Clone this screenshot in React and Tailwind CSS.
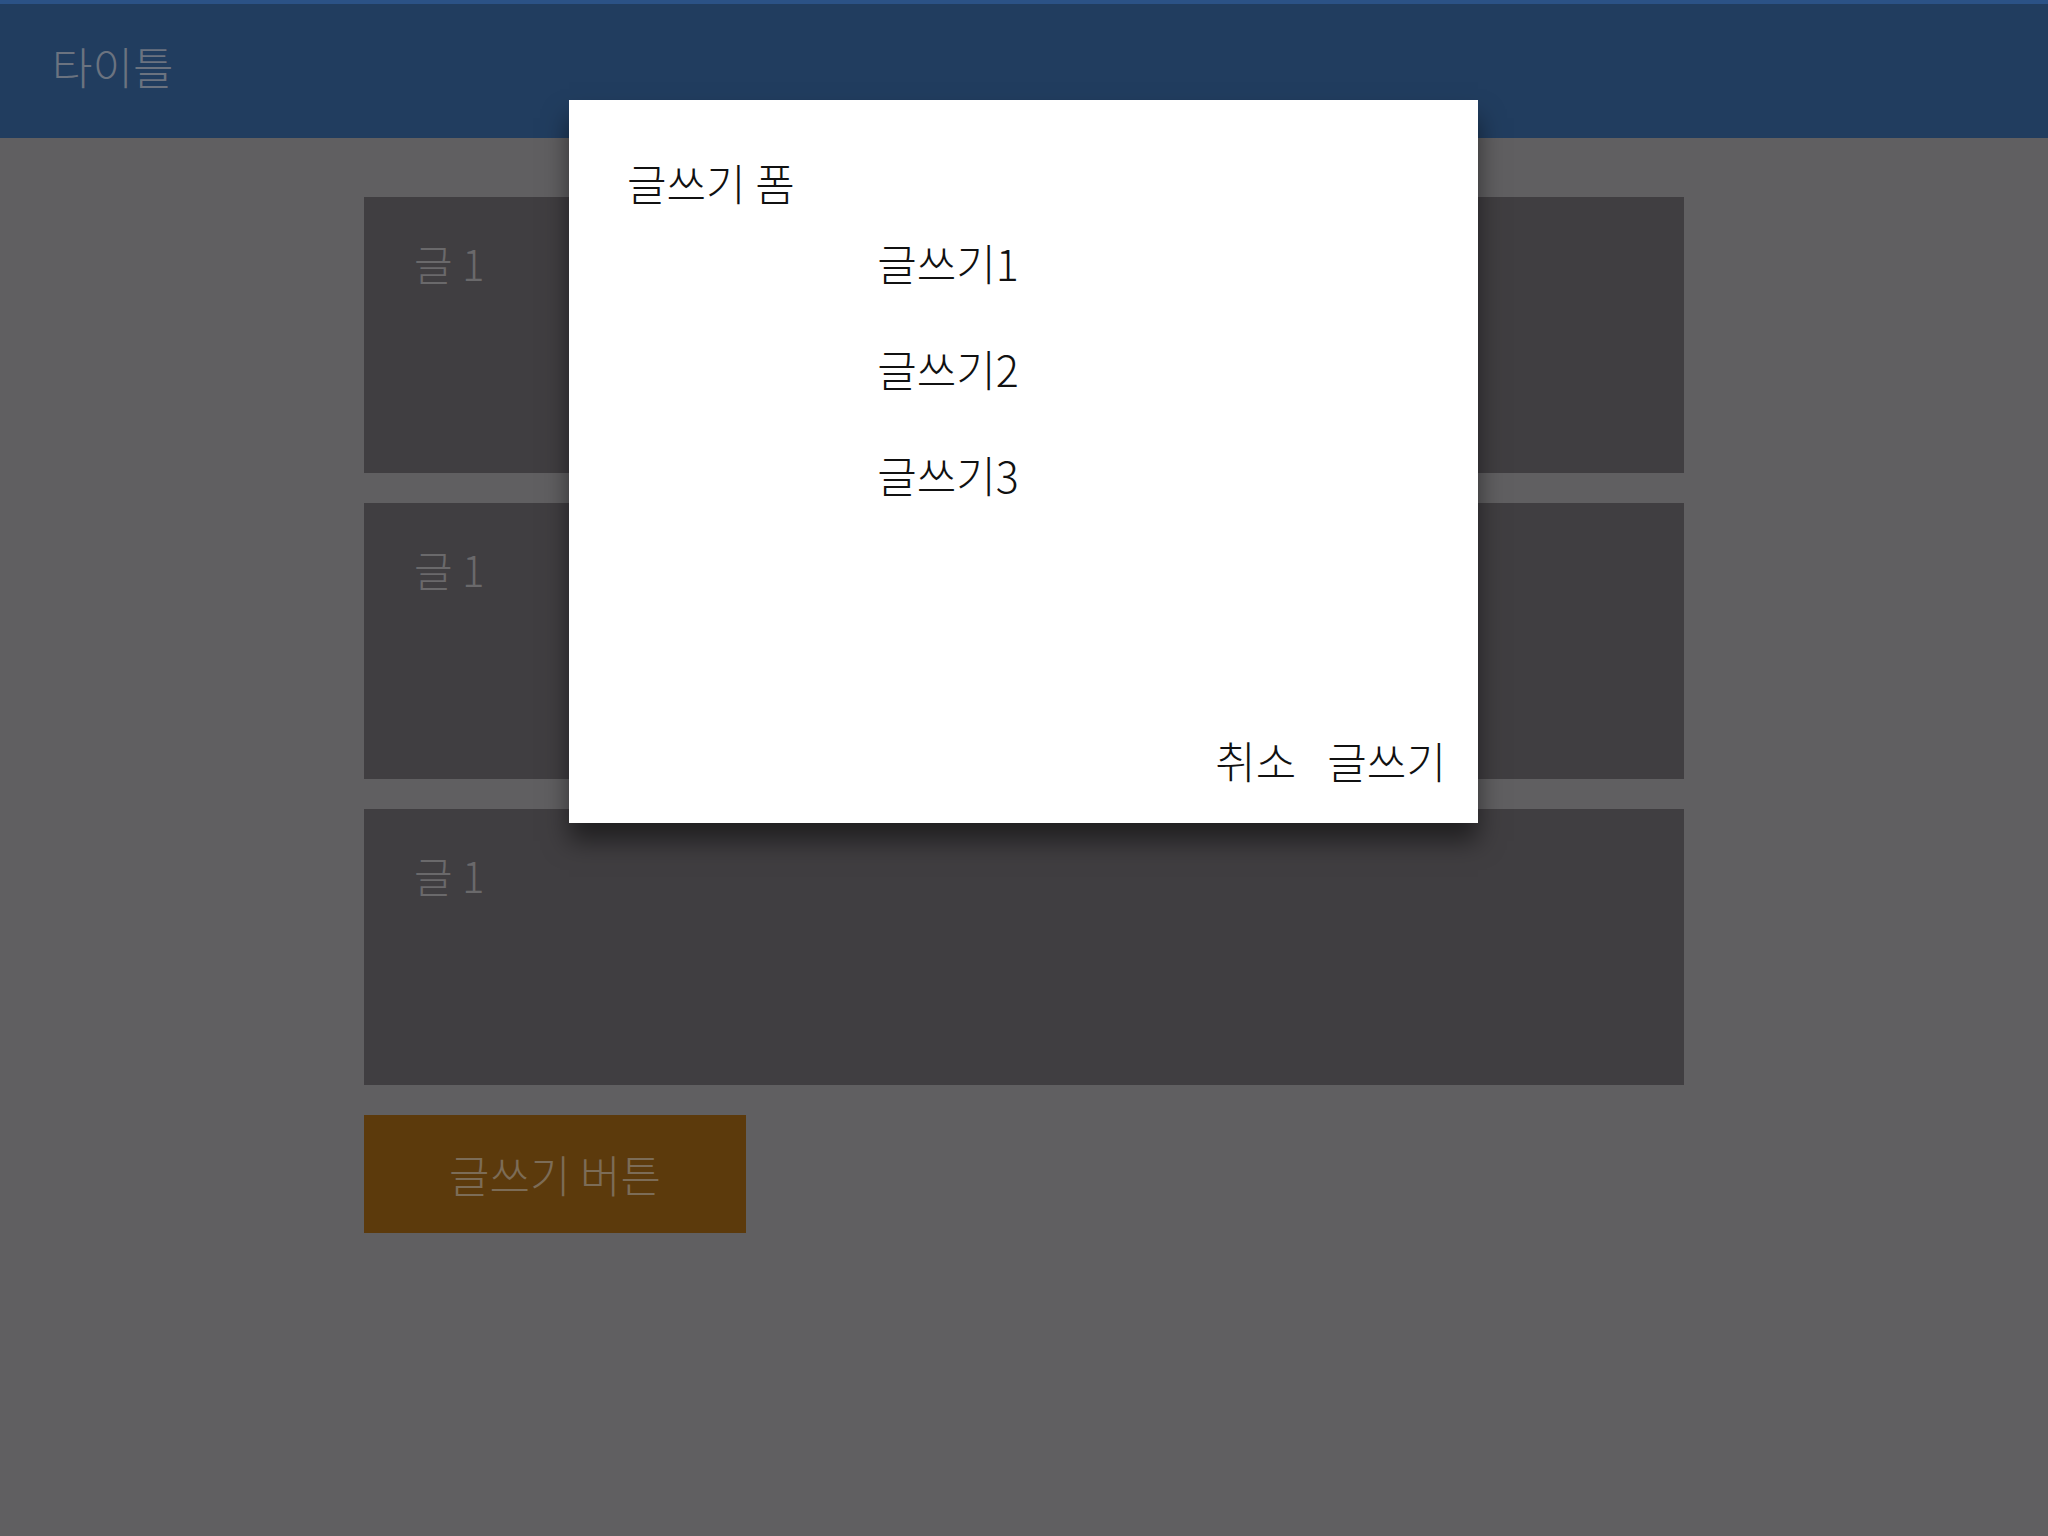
import { useState } from "react";

const FONT = { fontFamily: '"Noto Sans CJK KR", "Noto Sans", sans-serif' };

const posts = ["글 1", "글 1", "글 1"];
const fields = ["글쓰기1", "글쓰기2", "글쓰기3"];

function PostCard({ title }) {
  return (
    <div className="h-[276px] bg-[#403e41] pl-[50px] pt-[34px]">
      <span className="text-[42px] font-light leading-normal text-[#6a696b]">{title}</span>
    </div>
  );
}

function WriteModal({ onClose }) {
  return (
    <div className="absolute left-[569px] top-[100px] flex h-[723px] w-[909px] flex-col bg-white shadow-[0_18px_24px_rgba(0,0,0,0.5)]">
      <h2 className="pl-[58px] pt-[50px] text-[43px] font-light leading-normal text-[#111]">글쓰기 폼</h2>
      <div className="mt-[21px] flex w-[758px] flex-col gap-[54px]">
        {fields.map((f) => (
          <div key={f} className="text-center text-[43px] font-light leading-[52px] text-[#111]">
            {f}
          </div>
        ))}
      </div>
      <div className="mt-auto flex justify-end gap-[31px] pb-[30px] pr-[32px]">
        <button onClick={onClose} className="text-[44px] font-light leading-normal text-[#111]">
          취소
        </button>
        <button className="text-[43px] font-light leading-normal text-[#111]">글쓰기</button>
      </div>
    </div>
  );
}

export default function App() {
  const [open, setOpen] = useState(true);

  return (
    <div className="relative min-h-[1536px] w-[2048px] bg-[#605f61]" style={FONT}>
      <header className="flex h-[138px] items-center border-t-4 border-[#2b5286] bg-[#213d5f] pb-[10px] pl-[52px]">
        <h1 className="text-[44px] font-light text-[#6b7380]">타이틀</h1>
      </header>

      <main className="mx-auto flex w-[1320px] flex-col gap-[30px] pt-[59px]">
        {posts.map((p, i) => (
          <PostCard key={i} title={p} />
        ))}
        <button
          onClick={() => setOpen(true)}
          className="h-[118px] w-[382px] bg-[#5c3a0c] text-[44px] font-light text-[#7c6c57]"
        >
          글쓰기 버튼
        </button>
      </main>

      {open && <WriteModal onClose={() => setOpen(false)} />}
    </div>
  );
}
